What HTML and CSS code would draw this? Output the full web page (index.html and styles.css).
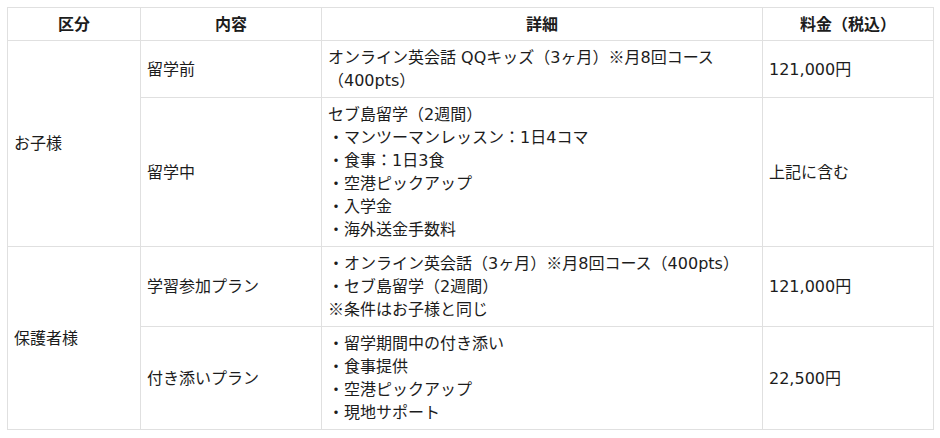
FILE: index.html
```html
<!DOCTYPE html>
<html lang="ja">
<head>
<meta charset="utf-8">
<link rel="stylesheet" href="styles.css">
</head>
<body>
<table class="price">
  <colgroup>
    <col class="c1"><col class="c2"><col class="c3"><col class="c4">
  </colgroup>
  <thead>
    <tr><th>区分</th><th>内容</th><th>詳細</th><th>料金（税込）</th></tr>
  </thead>
  <tbody>
    <tr>
      <td rowspan="2">お子様</td>
      <td>留学前</td>
      <td>オンライン英会話 QQキッズ（3ヶ月）<span class="jp">※</span>月8回コース（400pts）</td>
      <td>121,000円</td>
    </tr>
    <tr>
      <td>留学中</td>
      <td>セブ島留学（2週間）<br><span class="jp">・</span>マンツーマンレッスン：1日4コマ<br><span class="jp">・</span>食事：1日3食<br><span class="jp">・</span>空港ピックアップ<br><span class="jp">・</span>入学金<br><span class="jp">・</span>海外送金手数料</td>
      <td>上記に含む</td>
    </tr>
    <tr>
      <td rowspan="2">保護者様</td>
      <td>学習参加プラン</td>
      <td><span class="jp">・</span>オンライン英会話（3ヶ月）<span class="jp">※</span>月8回コース（400pts）<br><span class="jp">・</span>セブ島留学（2週間）<br><span class="jp">※</span>条件はお子様と同じ</td>
      <td>121,000円</td>
    </tr>
    <tr>
      <td>付き添いプラン</td>
      <td><span class="jp">・</span>留学期間中の付き添い<br><span class="jp">・</span>食事提供<br><span class="jp">・</span>空港ピックアップ<br><span class="jp">・</span>現地サポート</td>
      <td>22,500円</td>
    </tr>
  </tbody>
</table>
</body>
</html>
```
FILE: styles.css
```css
html, body {
  margin: 0;
  padding: 0;
  background: #fff;
}
body {
  padding: 7px;
  font-family: "DejaVu Sans", "Noto Sans CJK JP", sans-serif;
  font-size: 16px;
  line-height: 23px;
  color: #1c1c1c;
}
.jp {
  font-family: "Noto Sans CJK JP", sans-serif;
  line-height: 0;
}
.price {
  border-collapse: collapse;
  table-layout: fixed;
  width: 926px;
}
.c1 { width: 133px; }
.c2 { width: 181px; }
.c3 { width: 441px; }
.c4 { width: 171px; }
.price th,
.price td {
  border: 1px solid #e0e0e0;
  padding: 5px 6px;
  vertical-align: middle;
  text-align: left;
  font-weight: normal;
}
.price th {
  text-align: center;
  font-weight: bold;
  padding: 5px 6px 4px;
}
```
